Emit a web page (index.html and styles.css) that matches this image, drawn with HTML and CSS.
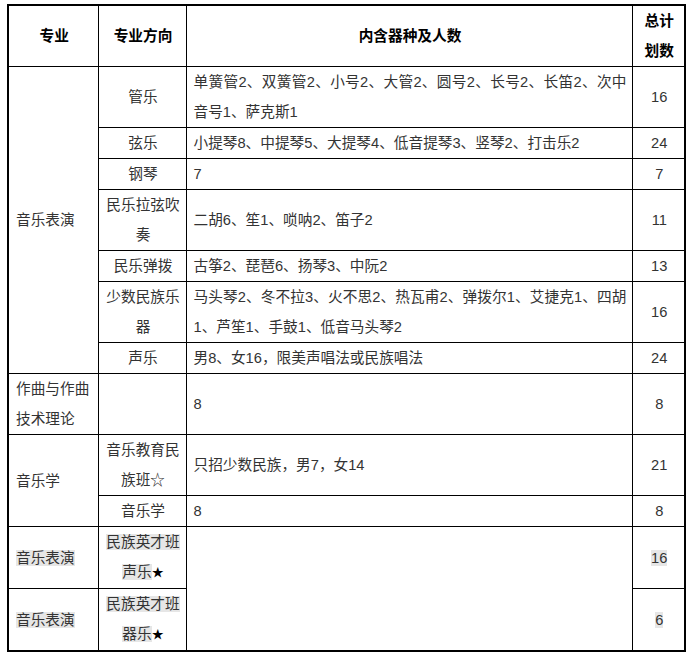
FILE: index.html
```html
<!DOCTYPE html>
<html lang="zh-CN">
<head>
<meta charset="utf-8">
<title>招生计划</title>
<link rel="stylesheet" href="styles.css">
</head>
<body>
<table class="plan">
  <colgroup>
    <col class="c1">
    <col class="c2">
    <col class="c3">
    <col class="c4">
  </colgroup>
  <thead>
    <tr>
      <th>专业</th>
      <th>专业方向</th>
      <th>内含器种及人数</th>
      <th>总计划数</th>
    </tr>
  </thead>
  <tbody>
    <tr>
      <td class="major" rowspan="7">音乐表演</td>
      <td class="dir">管乐</td>
      <td class="detail">单簧管2、双簧管2、小号2、大管2、圆号2、长号2、长笛2、次中音号1、萨克斯1</td>
      <td class="num">16</td>
    </tr>
    <tr>
      <td class="dir">弦乐</td>
      <td class="detail">小提琴8、中提琴5、大提琴4、低音提琴3、竖琴2、打击乐2</td>
      <td class="num">24</td>
    </tr>
    <tr>
      <td class="dir">钢琴</td>
      <td class="detail">7</td>
      <td class="num">7</td>
    </tr>
    <tr>
      <td class="dir">民乐拉弦吹奏</td>
      <td class="detail">二胡6、笙1、唢呐2、笛子2</td>
      <td class="num">11</td>
    </tr>
    <tr>
      <td class="dir">民乐弹拨</td>
      <td class="detail">古筝2、琵琶6、扬琴3、中阮2</td>
      <td class="num">13</td>
    </tr>
    <tr>
      <td class="dir">少数民族乐器</td>
      <td class="detail">马头琴2、冬不拉3、火不思2、热瓦甫2、弹拨尔1、艾捷克1、四胡1、芦笙1、手鼓1、低音马头琴2</td>
      <td class="num">16</td>
    </tr>
    <tr>
      <td class="dir">声乐</td>
      <td class="detail">男8、女16，限美声唱法或民族唱法</td>
      <td class="num">24</td>
    </tr>
    <tr>
      <td class="major">作曲与作曲技术理论</td>
      <td class="dir"></td>
      <td class="detail">8</td>
      <td class="num">8</td>
    </tr>
    <tr>
      <td class="major" rowspan="2">音乐学</td>
      <td class="dir">音乐教育民族班☆</td>
      <td class="detail">只招少数民族，男7，女14</td>
      <td class="num">21</td>
    </tr>
    <tr>
      <td class="dir">音乐学</td>
      <td class="detail">8</td>
      <td class="num">8</td>
    </tr>
    <tr>
      <td class="major"><span class="hl">音乐表演</span></td>
      <td class="dir"><span class="hl">民族英才班</span><br><span class="hl">声乐</span><span class="star">★</span></td>
      <td class="detail" rowspan="2"></td>
      <td class="num"><span class="hl">16</span></td>
    </tr>
    <tr>
      <td class="major"><span class="hl">音乐表演</span></td>
      <td class="dir"><span class="hl">民族英才班</span><br><span class="hl">器乐</span><span class="star">★</span></td>
      <td class="num"><span class="hl">6</span></td>
    </tr>
  </tbody>
</table>
</body>
</html>
```

FILE: styles.css
```css
html, body {
  margin: 0;
  padding: 0;
  background: #ffffff;
}

body {
  padding: 4px 0 0 7px;
  font-family: "Liberation Sans", "Noto Sans CJK SC", sans-serif;
  font-size: 14.67px;
  color: #333333;
}

.plan {
  border-collapse: collapse;
  table-layout: fixed;
  width: 677px;
  border: 2px solid #000000;
}

.c1 { width: 90px; }
.c2 { width: 88px; }
.c3 { width: 446px; }
.c4 { width: 53px; }

.plan th,
.plan td {
  border: 1px solid #000000;
  padding: 0 5px 0 7px;
  line-height: 30px;
  vertical-align: middle;
}

.plan th {
  font-weight: bold;
  color: #000000;
  text-align: center;
  height: 60px;
}

.major {
  text-align: left;
}

.dir {
  text-align: center;
}

.detail {
  text-align: justify;
}

.num {
  text-align: center;
}

.hl {
  background: #e6e6e6;
}

.star {
  color: #000000;
  font-size: 12px;
}
```
